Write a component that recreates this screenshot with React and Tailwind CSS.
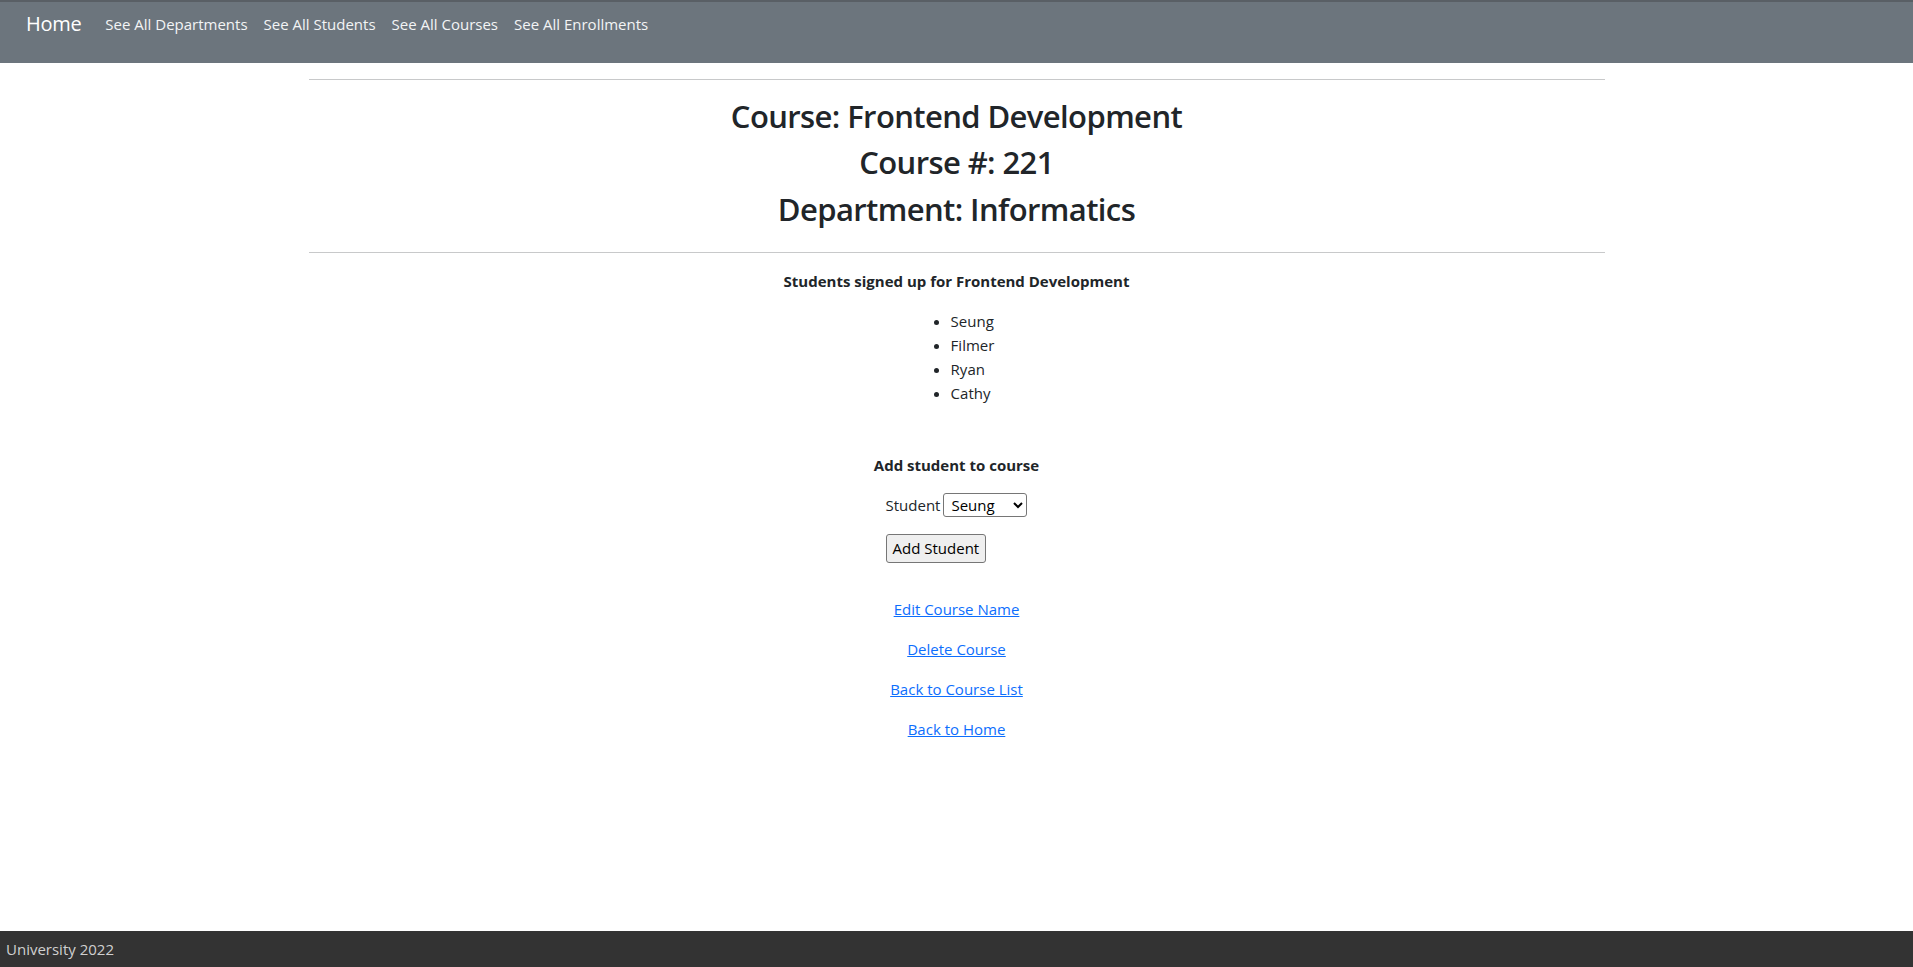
import React from "react";

const students = ["Seung", "Filmer", "Ryan", "Cathy"];

const navLinks = [
  "See All Departments",
  "See All Students",
  "See All Courses",
  "See All Enrollments",
];

const actions = [
  "Edit Course Name",
  "Delete Course",
  "Back to Course List",
  "Back to Home",
];

export default function App() {
  return (
    <div
      className="min-h-screen bg-white text-[#212529] text-base leading-6"
      style={{ fontFamily: '"Open Sans", "Noto Sans", sans-serif' }}
    >
      {/* Navbar */}
      <nav className="h-[63px] bg-[#6c757d] border-t-2 border-[#595f65] flex items-start px-[26px] pt-[7px]">
        <a href="#" className="text-white text-xl leading-[30px] mr-4 tracking-[-0.3px]">
          Home
        </a>
        <div className="flex pt-[3px]">
          {navLinks.map((l) => (
            <a
              key={l}
              href="#"
              className="text-[#f3f4f5] text-[15px] leading-6 px-2"
            >
              {l}
            </a>
          ))}
        </div>
      </nav>

      {/* Main content */}
      <main className="max-w-[1320px] mx-auto px-3 text-center pb-16">
        <hr className="my-4 border-t border-[#c8c9ca]" />
        <div className="pt-[1px]">
          <h2 className="text-[31px] leading-[38.4px] font-semibold mb-2 tracking-[-0.6px]">
            Course: Frontend Development
          </h2>
          <h2 className="text-[31px] leading-[38.4px] font-semibold mb-2 tracking-[-0.6px]">
            Course #: 221
          </h2>
          <h2 className="text-[31px] leading-[38.4px] font-semibold mb-0 tracking-[-0.6px]">
            Department: Informatics
          </h2>
        </div>
        <hr className="mt-6 mb-4 border-t border-[#c8c9ca]" />

        <p className="font-bold text-[15px] mb-4">
          Students signed up for Frontend Development
        </p>
        <ul className="inline-block text-left list-disc pl-8 mb-4 text-[15px]">
          {students.map((s) => (
            <li key={s}>{s}</li>
          ))}
        </ul>

        <div className="mt-8">
          <p className="font-bold text-[15px] mb-4">Add student to course</p>
          <form className="inline-block text-left text-[15px]">
            <div className="flex items-center">
              <label className="mr-[3px]">Student</label>
              <select className="h-6 w-[84px] border border-[#767676] rounded-[3px] bg-white text-black text-[15px] pl-[3px] text-left">
                {students.map((s) => (
                  <option key={s}>{s}</option>
                ))}
              </select>
            </div>
            <button
              type="button"
              className="mt-[17px] h-[29px] px-[6px] bg-[#efefef] border border-[#767676] rounded-[3px] text-black text-[15px] leading-none"
            >
              Add Student
            </button>
          </form>
        </div>

        <div className="mt-[34px]">
          {actions.map((a) => (
            <p key={a} className="mb-4 text-[15px]">
              <a href="#" className="text-[#0d6efd] underline">
                {a}
              </a>
            </p>
          ))}
        </div>
      </main>

      {/* Footer */}
      <footer className="fixed bottom-0 left-0 right-0 h-[36px] bg-[#333333] flex items-center px-[6px]">
        <span className="text-[#d0d0d0] text-[15px]">University 2022</span>
      </footer>
    </div>
  );
}
